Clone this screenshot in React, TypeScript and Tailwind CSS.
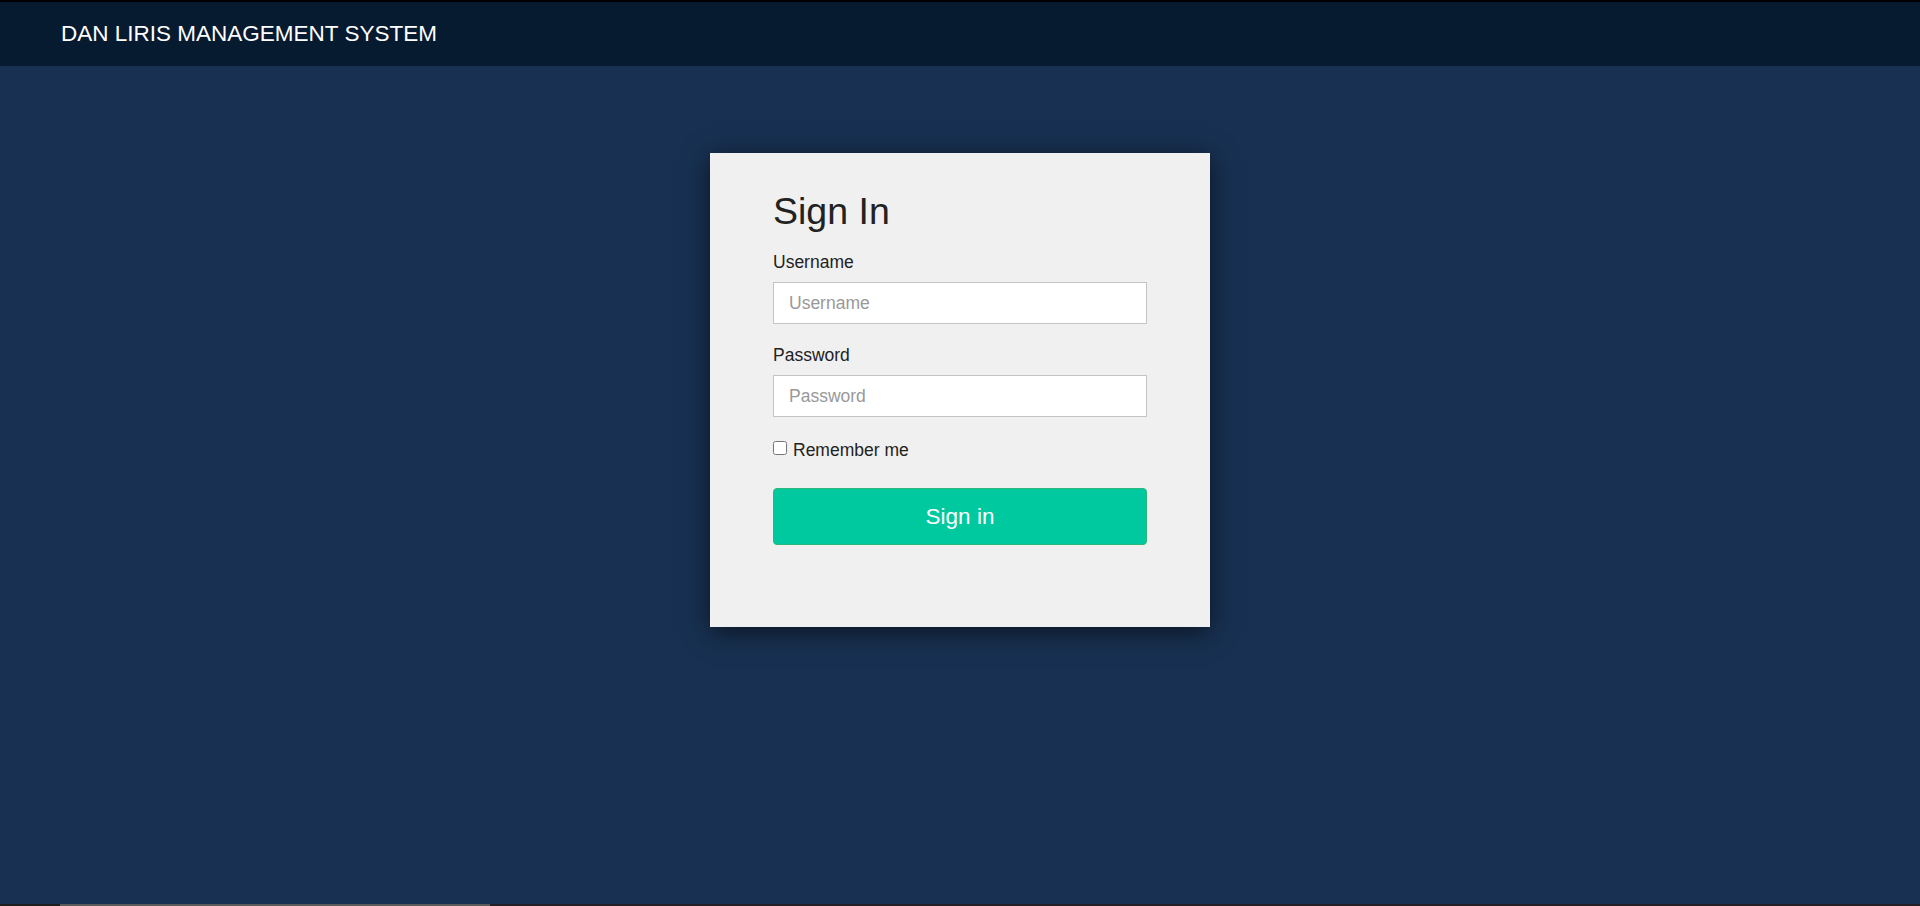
import { useState } from "react"

export default function App() {
    const [remember, setRemember] = useState(false)

    return (
        <div className="h-[906px] w-full flex flex-col overflow-hidden bg-[#183152] font-['Liberation_Sans',Arial,sans-serif]">
            {/* Top navbar */}
            <header className="h-[66px] shrink-0 border-t-2 border-black bg-[#061a30] pl-[61px] pt-[19px]">
                <span className="text-[22.5px] leading-[25px] text-white">DAN LIRIS MANAGEMENT SYSTEM</span>
            </header>

            {/* Login area */}
            <main className="flex-1 flex justify-center pt-[87px]">
                <div className="w-[500px] h-[474px] bg-[#f0f0f0] px-[63px] pt-[38px] shadow-[0_5px_25px_rgba(0,0,0,0.6)]">
                    <h2 className="text-[37.5px] leading-[41px] text-[#222]">Sign In</h2>

                    <form className="mt-[18px] flex flex-col" onSubmit={(e) => e.preventDefault()}>
                        <label className="text-[17.5px] leading-[25px] text-[#222]">Username</label>
                        <input
                            type="text"
                            placeholder="Username"
                            className="mt-[7px] h-[42px] w-full bg-white border border-[#c4c4c4] px-[15px] text-[17.5px] text-[#333] placeholder:text-[#999] outline-none"
                        />

                        <label className="mt-[19px] text-[17.5px] leading-[25px] text-[#222]">Password</label>
                        <input
                            type="password"
                            placeholder="Password"
                            className="mt-[7px] h-[42px] w-full bg-white border border-[#c4c4c4] px-[15px] text-[17.5px] text-[#333] placeholder:text-[#999] outline-none"
                        />

                        <label className="mt-[21px] flex items-start gap-[6px] text-[17.5px] leading-[25px] text-[#222]">
                            <input
                                type="checkbox"
                                checked={remember}
                                onChange={(e) => setRemember(e.target.checked)}
                                className="mt-[3px] w-[14px] h-[14px] m-0"
                            />
                            Remember me
                        </label>

                        <button
                            type="submit"
                            className="mt-[25px] h-[57px] w-full rounded-[4px] border border-[#2db87a] bg-[#00c9a0] text-[22.5px] text-white"
                        >
                            Sign in
                        </button>
                    </form>
                </div>
            </main>

            {/* Bottom strip */}
            <div className="h-[2px] shrink-0 flex bg-[#241e26]">
                <div className="w-[60px] bg-[#1e1e1e]" />
                <div className="w-[430px] bg-[#5a5a5a]" />
            </div>
        </div>
    )
}
